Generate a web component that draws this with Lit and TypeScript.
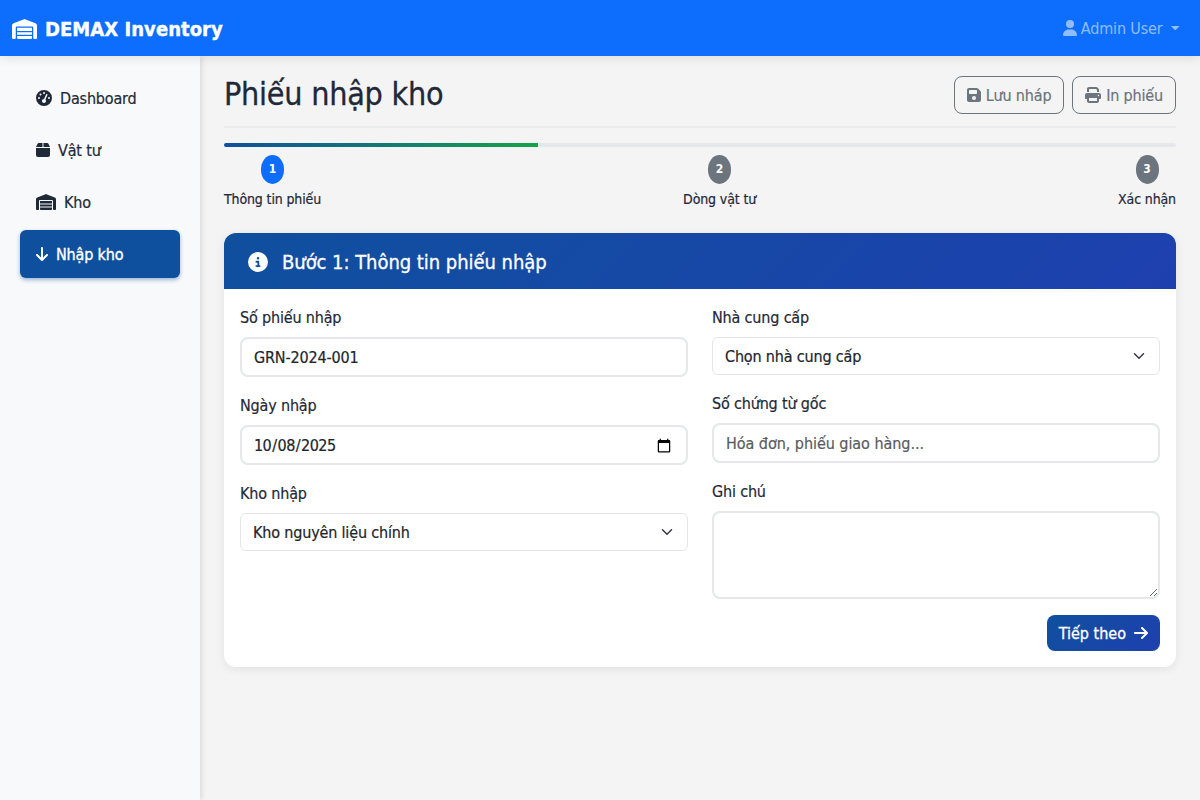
import { LitElement, html, css, svg } from "lit";
import { customElement } from "lit/decorators.js";

const ICONS: Record<string, [number, string]> = {
  warehouse: [640, "M0 488V171.3c0-26.2 15.9-49.7 40.2-59.4L308.1 4.8c7.6-3.1 16.1-3.1 23.8 0L599.8 111.9c24.3 9.7 40.2 33.3 40.2 59.4V488c0 13.3-10.7 24-24 24H568c-13.3 0-24-10.7-24-24V224c0-17.7-14.3-32-32-32H128c-17.7 0-32 14.3-32 32V488c0 13.3-10.7 24-24 24H24c-13.3 0-24-10.7-24-24zm488 24l-336 0c-13.3 0-24-10.7-24-24V432H512l0 56c0 13.3-10.7 24-24 24zM128 400V336H512v64H128zm0-96V224H512l0 80H128z"],
  user: [448, "M224 256A128 128 0 1 0 224 0a128 128 0 1 0 0 256zm-45.7 48C79.8 304 0 383.8 0 482.3C0 498.7 13.3 512 29.7 512H418.3c16.4 0 29.7-13.3 29.7-29.7C448 383.8 368.2 304 269.7 304H178.3z"],
  box: [448, "M50.7 58.5L0 160H208V32H93.7C75.5 32 58.9 42.3 50.7 58.5zM240 160H448L397.3 58.5C389.1 42.3 372.5 32 354.3 32H240V160zm208 32H0V416c0 35.3 28.7 64 64 64H384c35.3 0 64-28.7 64-64V192z"],
  gauge: [512, "M0 256a256 256 0 1 1 512 0A256 256 0 1 1 0 256zM288 96a32 32 0 1 0 -64 0 32 32 0 1 0 64 0zM256 416c35.3 0 64-28.7 64-64c0-17.4-6.9-33.1-18.1-44.6L366 161.7c5.3-12.1-.2-26.3-12.3-31.6s-26.3 .2-31.6 12.3L257.9 288c-.6 0-1.3 0-1.9 0c-35.3 0-64 28.7-64 64s28.7 64 64 64zM176 144a32 32 0 1 0 -64 0 32 32 0 1 0 64 0zM96 288a32 32 0 1 0 0-64 32 32 0 1 0 0 64zm352-32a32 32 0 1 0 -64 0 32 32 0 1 0 64 0z"],
  down: [384, "M169.4 470.6c12.5 12.5 32.8 12.5 45.3 0l160-160c12.5-12.5 12.5-32.8 0-45.3s-32.8-12.5-45.3 0L224 370.8 224 64c0-17.7-14.3-32-32-32s-32 14.3-32 32l0 306.7L54.6 265.4c-12.5-12.5-32.8-12.5-45.3 0s-12.5 32.8 0 45.3l160 160z"],
  right: [448, "M438.6 278.6c12.5-12.5 12.5-32.8 0-45.3l-160-160c-12.5-12.5-32.8-12.5-45.3 0s-12.5 32.8 0 45.3L338.8 224 32 224c-17.7 0-32 14.3-32 32s14.3 32 32 32l306.7 0L233.4 393.4c-12.5 12.5-12.5 32.8 0 45.3s32.8 12.5 45.3 0l160-160z"],
  save: [448, "M64 32C28.7 32 0 60.7 0 96V416c0 35.3 28.7 64 64 64H384c35.3 0 64-28.7 64-64V173.3c0-17-6.7-33.3-18.7-45.3L352 50.7C340 38.7 323.7 32 306.7 32H64zm0 96c0-17.7 14.3-32 32-32H288c17.7 0 32 14.3 32 32v64c0 17.7-14.3 32-32 32H96c-17.7 0-32-14.3-32-32V128zM224 288a64 64 0 1 1 0 128 64 64 0 1 1 0-128z"],
  print: [512, "M128 0C92.7 0 64 28.7 64 64v96h64V64H354.7L384 93.3V160h64V93.3c0-17-6.7-33.3-18.7-45.3L400 18.7C388 6.7 371.7 0 354.7 0H128zM384 352v32 64H128V384 368 352H384zm64 32h32c17.7 0 32-14.3 32-32V256c0-35.3-28.7-64-64-64H64c-35.3 0-64 28.7-64 64v96c0 17.7 14.3 32 32 32H64v64c0 35.3 28.7 64 64 64H384c35.3 0 64-28.7 64-64V384zM432 248a24 24 0 1 1 0 48 24 24 0 1 1 0-48z"],
  info: [512, "M256 512A256 256 0 1 0 256 0a256 256 0 1 0 0 512zM216 336h24V272H216c-13.3 0-24-10.7-24-24s10.7-24 24-24h48c13.3 0 24 10.7 24 24v88h8c13.3 0 24 10.7 24 24s-10.7 24-24 24H216c-13.3 0-24-10.7-24-24s10.7-24 24-24zm40-208a32 32 0 1 1 0 64 32 32 0 1 1 0-64z"],
};

const icon = (name: string) => {
  const [w, d] = ICONS[name];
  return html`<svg class="icon" viewBox="0 0 ${w} 512">${svg`<path d=${d}></path>`}</svg>`;
};

const chevron = html`<svg class="chevron" viewBox="0 0 16 16"><path d="m2 5 6 6 6-6" /></svg>`;

@customElement("app-root")
export class AppRoot extends LitElement {
  static styles = css`
    :host {
      display: flex;
      flex-direction: column;
      height: 800px;
      overflow: hidden;
      background: #f4f4f4;
      color: #1f2937;
      font: 16px/24px "DejaVu Sans Condensed", "DejaVu Sans", sans-serif;
      font-stretch: condensed;
      letter-spacing: -0.17px;
      -webkit-text-stroke: 0.2px currentColor;
    }
    * { box-sizing: border-box; }
    .icon { height: 1em; width: auto; fill: currentColor; flex: none; display: block; }
    .navbar {
      height: 56px;
      flex: none;
      display: flex;
      align-items: center;
      justify-content: space-between;
      padding: 0 20px 0 12px;
      background: #0d6efd;
      box-shadow: 0 2px 10px rgba(0, 0, 0, 0.1);
      z-index: 2;
    }
    .brand { display: flex; align-items: center; gap: 8px; color: #fff; font-size: 20px; font-weight: 700; letter-spacing: 0.05px; line-height: 30px; padding-top: 1px; -webkit-text-stroke: 0.4px #fff; }
    .user { display: flex; align-items: center; gap: 4px; color: rgba(255, 255, 255, 0.55); -webkit-text-stroke: 0; }
    .user span, .link span, .outline span, .next span, .select span { padding-top: 2px; }
    .caret { width: 9.6px; height: 4.8px; background: currentColor; clip-path: polygon(0 0, 100% 0, 50% 100%); margin-left: 4px; }
    .layout { display: flex; flex: 1; }
    .sidebar {
      width: 200px;
      flex: none;
      display: flex;
      flex-direction: column;
      gap: 4px;
      padding: 18px 20px;
      background: #f8f9fa;
      box-shadow: 2px 0 5px rgba(0, 0, 0, 0.1);
    }
    .link { height: 48px; display: flex; align-items: center; gap: 8px; padding: 0 16px; border-radius: 6px; }
    .link.active { background: #0f509e; color: #fff; -webkit-text-stroke: 0.35px #fff; box-shadow: 0 2px 4px rgba(15, 80, 158, 0.4); }
    .main { flex: 1; padding: 16px 24px 0; display: flex; flex-direction: column; }
    .heading { display: flex; align-items: center; justify-content: space-between; padding-bottom: 7.6px; border-bottom: 2px solid #ebebee; height: 56px; flex: none; }
    h1 { margin: 0 0 5px; padding-top: 3px; font-size: 32px; line-height: 38.4px; font-weight: 400; letter-spacing: -0.25px; -webkit-text-stroke: 0.3px currentColor; }
    .actions { display: flex; gap: 8px; }
    .outline { height: 38px; display: flex; align-items: center; gap: 4.8px; padding: 0 12px; border: 1px solid #6c757d; border-radius: 8px; color: #6c757d; }
    .progress { height: 4px; flex: none; margin-top: 15.4px; border-radius: 2px; background: #e5e7eb; overflow: hidden; }
    .bar { width: 33%; height: 100%; background: linear-gradient(90deg, #0f509e, #16a34a); }
    .steps { display: flex; justify-content: space-between; margin-top: 8px; }
    .step { display: flex; flex-direction: column; align-items: center; gap: 5px; height: 53.2px; font-size: 14px; line-height: 21px; letter-spacing: -0.13px; }
    .badge { width: 23px; height: 28.2px; flex: none; border-radius: 50%; background: #6c757d; color: #fff; font-size: 12px; line-height: 29px; font-weight: 700; text-align: center; -webkit-text-stroke: 0; }
    .badge.on { background: #0d6efd; }
    .card { margin-top: 24px; border-radius: 12px; background: #fff; box-shadow: 0 2px 10px rgba(0, 0, 0, 0.08); overflow: hidden; }
    .card-head { height: 56px; display: flex; align-items: center; gap: 14px; padding: 2px 24px 0; background: linear-gradient(135deg, #0f509e, #1e40af); color: #fff; font-size: 20px; letter-spacing: -0.05px; -webkit-text-stroke: 0.3px #fff; }
    .card-body { padding: 16px; }
    .columns { display: grid; grid-template-columns: 1fr 1fr; gap: 24px; }
    .column { display: flex; flex-direction: column; gap: 16px; }
    .field { display: flex; flex-direction: column; gap: 8px; }
    .label { height: 24px; padding-top: 1px; }
    .input {
      height: 40px;
      width: 100%;
      margin: 0;
      padding: 7px 12px 5px;
      border: 2px solid #e5e7eb;
      border-radius: 8px;
      background: #fff;
      color: #212529;
      font: inherit;
      letter-spacing: inherit;
      outline: 0;
    }
    .input::placeholder { color: #595c5f; opacity: 1; letter-spacing: -0.05px; }
    .date { letter-spacing: -0.55px; padding-left: 11px; }
    .area { height: 88px; display: block; resize: vertical; }
    .select { height: 38px; display: flex; align-items: center; justify-content: space-between; padding: 0 12px; border: 1px solid #e2e4e8; border-radius: 6px; color: #212529; }
    .chevron { width: 16px; height: 12px; fill: none; stroke: #343a40; stroke-width: 2; stroke-linecap: round; stroke-linejoin: round; }
    .foot { display: flex; justify-content: flex-end; margin-top: 16px; }
    .next { height: 36px; display: flex; align-items: center; gap: 8px; padding: 0 12px; border-radius: 8px; background: linear-gradient(135deg, #0f509e, #1e40af); color: #fff; letter-spacing: 0; -webkit-text-stroke: 0.3px #fff; }
  `;

  render() {
    return html`
      <header class="navbar">
        <div class="brand">${icon("warehouse")}<span>DEMAX Inventory</span></div>
        <div class="user">${icon("user")}<span>Admin User</span><i class="caret"></i></div>
      </header>
      <div class="layout">
        <nav class="sidebar">
          <div class="link">${icon("gauge")}<span>Dashboard</span></div>
          <div class="link">${icon("box")}<span>Vật tư</span></div>
          <div class="link">${icon("warehouse")}<span>Kho</span></div>
          <div class="link active">${icon("down")}<span>Nhập kho</span></div>
        </nav>
        <main class="main">
          <div class="heading">
            <h1>Phiếu nhập kho</h1>
            <div class="actions">
              <div class="outline">${icon("save")}<span>Lưu nháp</span></div>
              <div class="outline">${icon("print")}<span>In phiếu</span></div>
            </div>
          </div>
          <div class="progress"><div class="bar"></div></div>
          <div class="steps">
            <div class="step"><span class="badge on">1</span><span>Thông tin phiếu</span></div>
            <div class="step"><span class="badge">2</span><span>Dòng vật tư</span></div>
            <div class="step"><span class="badge">3</span><span>Xác nhận</span></div>
          </div>
          <section class="card">
            <div class="card-head">${icon("info")}<span>Bước 1: Thông tin phiếu nhập</span></div>
            <div class="card-body">
              <div class="columns">
                <div class="column">
                  <div class="field"><span class="label">Số phiếu nhập</span><input class="input" value="GRN-2024-001" /></div>
                  <div class="field"><span class="label">Ngày nhập</span><input class="input date" type="date" value="2025-10-08" /></div>
                  <div class="field"><span class="label">Kho nhập</span><div class="select"><span>Kho nguyên liệu chính</span>${chevron}</div></div>
                </div>
                <div class="column">
                  <div class="field"><span class="label">Nhà cung cấp</span><div class="select"><span>Chọn nhà cung cấp</span>${chevron}</div></div>
                  <div class="field"><span class="label">Số chứng từ gốc</span><input class="input" placeholder="Hóa đơn, phiếu giao hàng..." /></div>
                  <div class="field"><span class="label">Ghi chú</span><textarea class="input area"></textarea></div>
                </div>
              </div>
              <div class="foot"><div class="next"><span>Tiếp theo</span>${icon("right")}</div></div>
            </div>
          </section>
        </main>
      </div>
    `;
  }
}
